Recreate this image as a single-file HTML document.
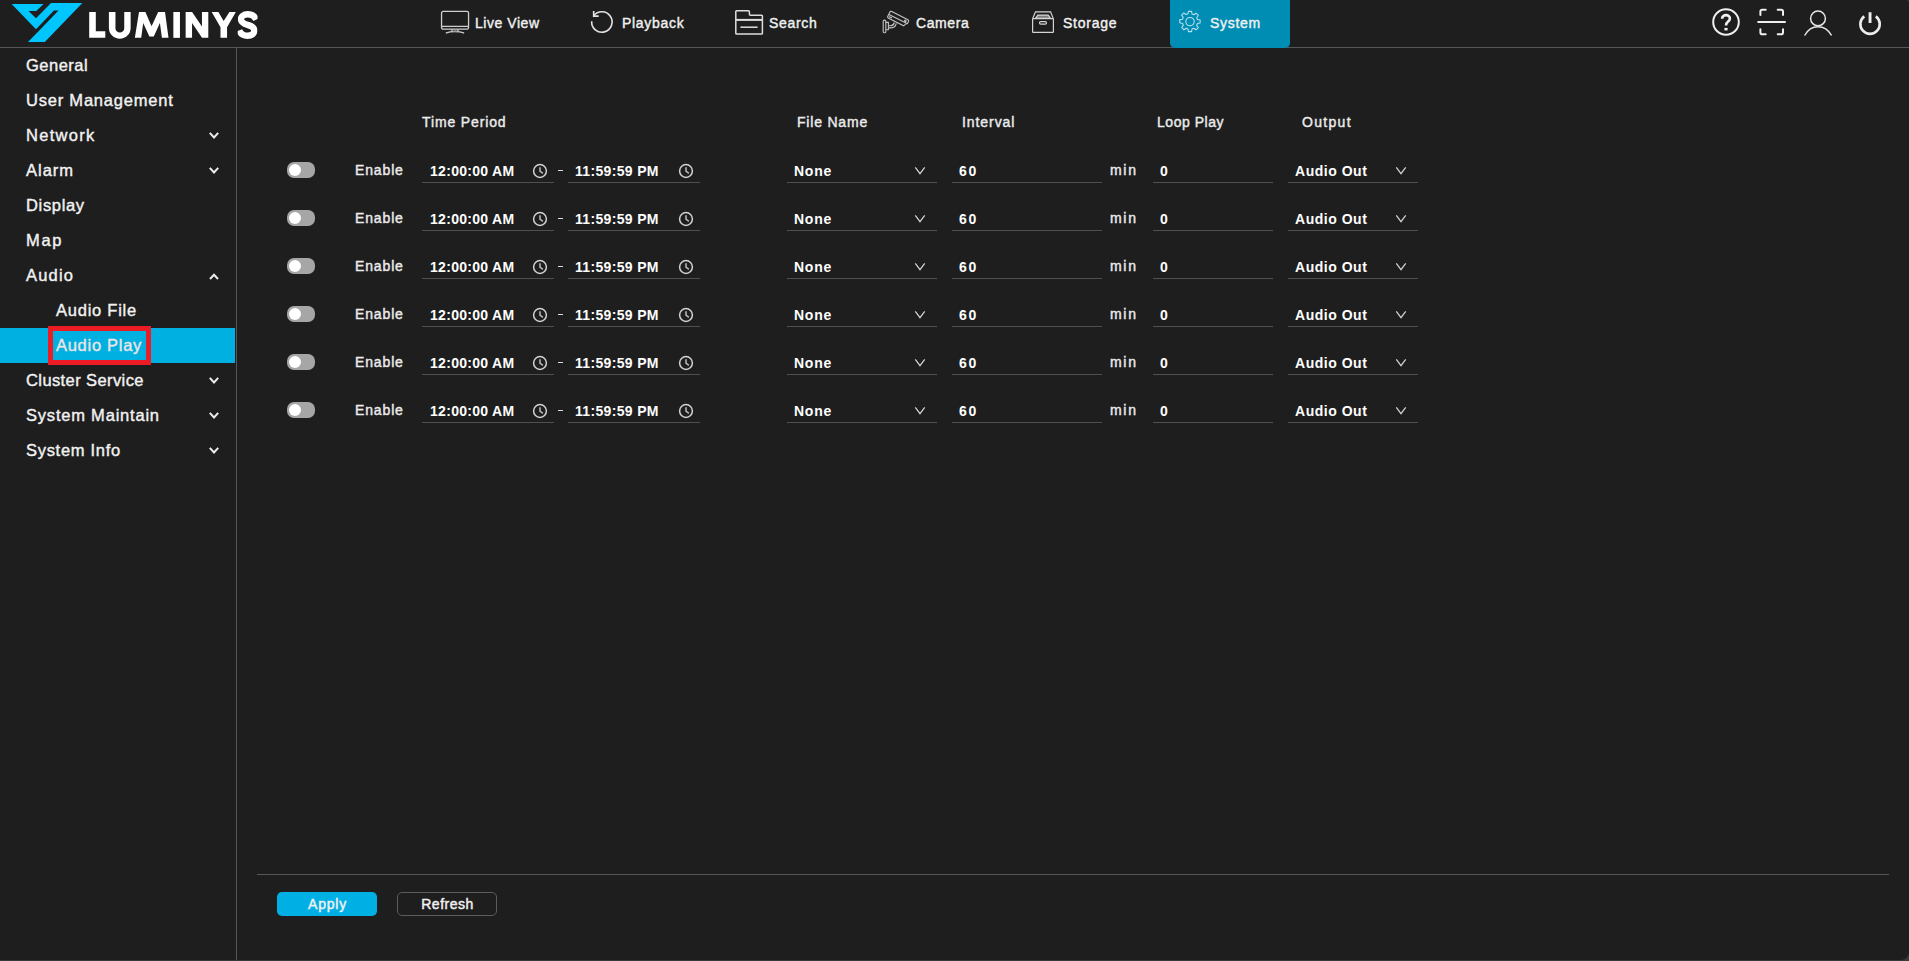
<!DOCTYPE html>
<html>
<head>
<meta charset="utf-8">
<title>Audio Play</title>
<style>
*{box-sizing:border-box;margin:0;padding:0}
html,body{width:1909px;height:961px;overflow:hidden;background:#3a3a3a}
body{font-family:"Liberation Sans",sans-serif;color:#ececec;font-weight:bold}
#app{position:absolute;left:0;top:0;width:1909px;height:960px;background:#1e1e1e;border-radius:0 3px 8px 0;overflow:hidden}
.abs{position:absolute;white-space:nowrap;z-index:3}
/* top bar */
#topline{position:absolute;left:0;top:47px;width:1909px;height:1px;background:#555759}
#sideline{position:absolute;left:236px;top:48px;width:1px;height:913px;background:#555759}
.nav{position:absolute;z-index:3;top:0;height:47px;line-height:46px;font-size:14px;color:#f0f0f0;white-space:nowrap;font-weight:normal;-webkit-text-stroke:.4px #f0f0f0}
#navsys{position:absolute;left:1170px;top:0;width:120px;height:48px;background:#008db4;border-radius:0 0 5px 5px;z-index:2}
/* sidebar */
.si{position:absolute;left:26px;height:35px;line-height:35px;font-size:16.5px;letter-spacing:.6px;color:#f2f2f2;white-space:nowrap;font-weight:normal;-webkit-text-stroke:.4px #f2f2f2}
.si.sub{left:56px}
.chev{position:absolute;left:208px;width:12px;height:8px}
#sel{position:absolute;left:0;top:328px;width:235px;height:35px;background:#00b0e0}
#redbox{position:absolute;left:48px;top:326px;width:103px;height:39px;border:5px solid #ed1c24}
/* table */
.th{position:absolute;top:112px;height:20px;line-height:20px;font-size:14px;color:#ececec;white-space:nowrap;font-weight:normal;-webkit-text-stroke:.4px #ececec}
.row{position:absolute;left:0;width:1909px;height:48px}
.tg{position:absolute;left:287px;top:-8px;width:28px;height:16px;border-radius:7px;background:#a6a6a6}
.tg i{position:absolute;left:2px;top:2px;width:12px;height:12px;border-radius:6px;background:#fff}
.lbl{position:absolute;font-size:14px;height:20px;line-height:20px;top:-10px;color:#ececec;white-space:nowrap;font-weight:normal;-webkit-text-stroke:.4px #ececec}
.inp{position:absolute;top:-13px;height:26px;border-bottom:1px solid #4e5051;font-size:14px;line-height:28px;padding-left:7px;color:#fff;white-space:nowrap}
.ico{position:absolute}
.dash{position:absolute;left:558px;top:0;width:5px;height:1.400px;background:#dcdcdc}
/* bottom */
#botline{position:absolute;left:257px;top:874px;width:1632px;height:1px;background:#555759}
.btn{position:absolute;top:892px;width:100px;height:24px;line-height:25px;border-radius:5px;text-align:center;font-size:14px;color:#f0f0f0;font-weight:normal;-webkit-text-stroke:.45px #f0f0f0}
#apply{left:277px;background:#00b0e4;letter-spacing:.75px;padding-left:1px}
#refresh{left:397px;border:1px solid #5a5c5e;line-height:23px;letter-spacing:.5px;padding-left:1px}
</style>
</head>
<body>
<div id="app">
<!--TOPBAR-->
<svg class="abs" style="left:0;top:0" width="100" height="47" viewBox="0 0 100 47"><path fill="#00c6ff" d="M11.6 4 L43.6 4 L36.3 11 L28.6 11 L36 18.3 L51 3.1 L82.4 3.1 L44.8 42 L28 42 L38.3 31.4 L58.5 10.4 L54 10.4 L36 29.2 Z"/></svg>
<svg class="abs" style="left:0;top:0" width="270" height="47" viewBox="0 0 270 47" fill="#fff">
<path d="M89.2 12H95.800V31.300H105.300V37.850H89.200Z"/>
<path d="M108.900 12H115.450V28.200A4.400 4.400 0 0 0 124.250 28.200V12H130.650V28A10.870 10.750 0 0 1 108.900 28Z"/>
<path d="M134.850 37.850L139 12H145.400L151.560 26.200L158.150 12H165L168.500 37.850H161.900L159.900 23L153.760 36.600H149.360L143.200 23L141.200 37.850Z"/>
<path d="M173.350 12H179.950V37.850H173.350Z"/>
<path d="M185.650 37.850V12H192.100L201.950 26.600V12H208.300V37.850H202L192.050 23.100V37.850Z"/>
<path d="M211.700 12H218.400L223.650 21L229.450 12H235.850L227.050 27.350V37.850H220.500V27.350Z"/>
<clipPath id="sc"><rect x="237.700" y="0" width="19.850" height="47"/></clipPath><path clip-path="url(#sc)" fill="none" stroke="#fff" stroke-width="6.400" d="M256.200 19.600C254.300 15.600 251.400 14.300 247.600 14.300C243.600 14.300 241 16.300 241 19.300C241 22.400 243.500 23.700 247.600 24.900C251.700 26.100 254.300 27.400 254.300 30.600C254.300 33.700 251.600 35.700 247.500 35.700C243.700 35.700 240.800 34.200 239.200 30.400"/>
</svg>
<div id="navsys"></div>
<!-- live view -->
<svg class="abs" style="left:440px;top:10px" width="30" height="24" viewBox="0 0 30 24" fill="none" stroke="#cecece" stroke-width="1.300"><rect x="1.550" y="1.400" width="27" height="17.800" rx="1.600"/><path d="M1.600 16.300H28.500M11.900 19.600V21.600M18 19.600V21.600"/><path d="M6.400 22.900C10.500 21.200 19.500 21.200 23.600 22.900" stroke-width="1.400" stroke-linecap="round"/><rect x="13.300" y="20.200" width="3.400" height="1.500" fill="#8a8a8a" stroke="none"/></svg>
<div class="nav" style="left:475px;letter-spacing:0.55px">Live View</div>
<!-- playback -->
<svg class="abs" style="left:589px;top:9px" width="26" height="26" viewBox="0 0 26 26" fill="none" stroke="#e2e2e2" stroke-width="1.600"><path d="M2.700 12.200A10.200 10.200 0 1 0 4.700 6.900"/><path d="M4.700 1.900V7.100H9.700" stroke-width="1.700"/></svg>
<div class="nav" style="left:622px;letter-spacing:0.71px">Playback</div>
<!-- search -->
<svg class="abs" style="left:734px;top:9px" width="30" height="27" viewBox="0 0 30 27" fill="none" stroke="#dedede" stroke-width="1.500"><path d="M2.600 25.100Q1.800 25.100 1.800 24.300V2.600Q1.800 1.800 2.600 1.800H14.400Q15.400 1.800 15.400 2.800V5.200Q15.400 6.200 16.400 6.200H27.600Q28.400 6.200 28.400 7V24.300Q28.400 25.100 27.600 25.100Z"/><path d="M1.800 10.900H28.400" stroke-width="2"/><path d="M6.400 18.200H23.600" stroke-width="1.500"/></svg>
<div class="nav" style="left:769px;letter-spacing:0.7px">Search</div>
<!-- camera -->
<svg class="abs" style="left:881px;top:9px" width="30" height="26" viewBox="0 0 30 26" fill="none" stroke="#c4c4c4" stroke-width="1.100"><g transform="translate(9.500 1.900) rotate(26.800)"><path d="M1.400 0H19.600Q20.800 0 20.800 1.200V3.300Q20.800 4.300 19.700 4.300L18.500 7.400H1.600Q0 7.400 0 5.800V1.400Q0 0 1.400 0Z"/><path d="M.200 3.900H19.900M1.200 5.700H4.500"/><circle cx="17.700" cy="2.200" r=".800"/></g><rect x="2.200" y="11.100" width="2.600" height="12.700" rx="1.100"/><path d="M4.800 13.400H7.400V20.800H4.800"/><path d="M7.400 16.700H9.600Q12.600 16.700 13.400 13.500M7.400 18.900H10.400Q14.200 18.900 15.300 14.400"/></svg>
<div class="nav" style="left:916px;letter-spacing:0.6px">Camera</div>
<!-- storage -->
<svg class="abs" style="left:1031px;top:10px" width="24" height="24" viewBox="0 0 24 24" fill="none" stroke="#d4d4d4" stroke-width="1.200"><rect x="1.600" y="8.600" width="20.800" height="13.700" rx=".600"/><path d="M1.700 8.600L4.500 1.800H19.600L22.300 8.600"/><path d="M4.400 8.400L6.800 5.100H17.200L19.700 8.400Z" fill="#7c7c7c"/><rect x="8.500" y="11.600" width="7" height="2.500" rx="1.250"/></svg>
<div class="nav" style="left:1063px;letter-spacing:0.77px">Storage</div>
<!-- system -->
<svg class="abs" style="left:1178px;top:10px" width="24" height="24" viewBox="0 0 24 24" fill="none" stroke="#b9e0ee" stroke-width="1.150" stroke-linejoin="round"><g transform="translate(12 11.600) scale(.930) translate(-12 -11.600)"><circle cx="12" cy="11.600" r="4.500"/><path d="M10.300 1h3.400l.5 2.9 1.9.8 2.4-1.7 2.4 2.4-1.7 2.4.8 1.9 2.9.5v3.4l-2.9.5-.8 1.9 1.7 2.4-2.4 2.4-2.4-1.7-1.9.8-.5 2.9h-3.4l-.5-2.9-1.9-.8-2.4 1.7-2.4-2.4 1.7-2.4-.8-1.9L1 13.300v-3.4l2.900-.5.8-1.9-1.700-2.400 2.400-2.400 2.400 1.700 1.900-.8z" transform="translate(0 -0.400)"/></g></svg>
<div class="nav" style="left:1210px;letter-spacing:0.7px">System</div>
<!-- right icons -->
<svg class="abs" style="left:1710px;top:6px" width="32" height="32" viewBox="0 0 32 32" fill="none" stroke="#efefef" stroke-width="2"><circle cx="16" cy="16" r="12.8"/><path d="M12.100 12.700C12.100 8 19.900 8 19.900 12.600C19.900 15.700 16 15.500 16 19.400" stroke-width="2.600"/><rect x="14.400" y="21.900" width="3.200" height="2.500" fill="#efefef" stroke="none"/></svg>
<svg class="abs" style="left:1756px;top:7px" width="32" height="30" viewBox="0 0 32 30" fill="none" stroke="#efefef" stroke-width="2" stroke-linecap="round"><path d="M2.200 15H29"/><path d="M4.400 7.900V4.600Q4.400 2.800 6.200 2.800H9.700M21.700 2.800H25.200Q27 2.800 27 4.600V7.900M4.400 22.300V25.400Q4.400 27.200 6.200 27.200H9.700M21.700 27.200H25.200Q27 27.200 27 25.400V22.300"/></svg>
<svg class="abs" style="left:1802px;top:8px" width="32" height="30" viewBox="0 0 32 30" fill="none" stroke="#e6e6e6" stroke-width="1.500"><circle cx="16" cy="10.400" r="7.400"/><path d="M2.600 27.500C9 15.800 23 15.800 29.600 27.500"/></svg>
<svg class="abs" style="left:1856px;top:9px" width="28" height="28" viewBox="0 0 28 28" fill="none" stroke="#ececec" stroke-width="2.600"><path d="M14.050 3.200V14" stroke-width="2.900"/><path d="M8.300 7.400A9.700 9.700 0 1 0 19.800 7.400"/></svg>
<div id="topline"></div>
<!--/TOPBAR-->
<!--SIDEBAR-->
<div id="sel"></div>
<div class="si" style="top:48px;letter-spacing:0.5px">General</div>
<div class="si" style="top:83px;letter-spacing:0.79px">User Management</div>
<div class="si" style="top:118px;letter-spacing:1.3px">Network</div>
<svg class="chev" style="top:132px" viewBox="0 0 12 8" fill="none" stroke="#ececec" stroke-width="2"><path d="M1.800 .800L6 5.400L10.200 .800"/></svg>
<div class="si" style="top:153px;letter-spacing:1.0px">Alarm</div>
<svg class="chev" style="top:167px" viewBox="0 0 12 8" fill="none" stroke="#ececec" stroke-width="2"><path d="M1.800 .800L6 5.400L10.200 .800"/></svg>
<div class="si" style="top:188px;letter-spacing:0.67px">Display</div>
<div class="si" style="top:223px;letter-spacing:1.7px">Map</div>
<div class="si" style="top:258px;letter-spacing:1.2px">Audio</div>
<svg class="chev" style="top:272px" viewBox="0 0 12 8" fill="none" stroke="#ececec" stroke-width="2"><path d="M2 7L6 2.800L10 7"/></svg>
<div class="si sub" style="top:293px;letter-spacing:0.76px">Audio File</div>
<div class="si sub" style="top:328px;letter-spacing:0.72px;color:#ebe6e6;-webkit-text-stroke-color:#ebe6e6">Audio Play</div>
<div class="si" style="top:363px;letter-spacing:0.4px">Cluster Service</div>
<svg class="chev" style="top:377px" viewBox="0 0 12 8" fill="none" stroke="#ececec" stroke-width="2"><path d="M1.800 .800L6 5.400L10.200 .800"/></svg>
<div class="si" style="top:398px;letter-spacing:0.79px">System Maintain</div>
<svg class="chev" style="top:412px" viewBox="0 0 12 8" fill="none" stroke="#ececec" stroke-width="2"><path d="M1.800 .800L6 5.400L10.200 .800"/></svg>
<div class="si" style="top:433px;letter-spacing:0.7px">System Info</div>
<svg class="chev" style="top:447px" viewBox="0 0 12 8" fill="none" stroke="#ececec" stroke-width="2"><path d="M1.800 .800L6 5.400L10.200 .800"/></svg>
<div id="redbox"></div>
<div id="sideline"></div>
<!--/SIDEBAR-->
<!--MAIN-->
<div class="th" style="left:422px;letter-spacing:0.87px">Time Period</div>
<div class="th" style="left:797px;letter-spacing:0.8px">File Name</div>
<div class="th" style="left:962px;letter-spacing:0.93px">Interval</div>
<div class="th" style="left:1157px;letter-spacing:0.54px">Loop Play</div>
<div class="th" style="left:1302px;letter-spacing:1.3px">Output</div>
<div class="row" style="top:170px"><div class="tg"><i></i></div><div class="lbl" style="left:355px;letter-spacing:.86px">Enable</div><div class="inp" style="left:422px;width:132px;letter-spacing:.3px;padding-left:8px">12:00:00 AM</div><svg class="ico" style="left:532px;top:-7px" width="16" height="16" viewBox="0 0 16 16" fill="none" stroke="#d2d2d2" stroke-width="1.500"><circle cx="8" cy="8" r="6.400"/><path d="M8 4.300V8L10.900 10.400" stroke="#b4b4b4" stroke-width="1.600"/></svg><div class="dash"></div><div class="inp" style="left:568px;width:132px;letter-spacing:.33px">11:59:59 PM</div><svg class="ico" style="left:678px;top:-7px" width="16" height="16" viewBox="0 0 16 16" fill="none" stroke="#d2d2d2" stroke-width="1.500"><circle cx="8" cy="8" r="6.400"/><path d="M8 4.300V8L10.900 10.400" stroke="#b4b4b4" stroke-width="1.600"/></svg><div class="inp" style="left:787px;width:150px;letter-spacing:.75px">None</div><svg class="ico" style="left:914px;top:-4px" width="12" height="9" viewBox="0 0 12 9" fill="none" stroke="#d4d4d4" stroke-width="1.250"><path d="M1.300 1.400L6 7.600L10.700 1.400"/></svg><div class="inp" style="left:952px;width:150px;letter-spacing:1.600px">60</div><div class="lbl" style="left:1110px;letter-spacing:1.700px">min</div><div class="inp" style="left:1153px;width:120px">0</div><div class="inp" style="left:1288px;width:130px;letter-spacing:.52px">Audio Out</div><svg class="ico" style="left:1395px;top:-4px" width="12" height="9" viewBox="0 0 12 9" fill="none" stroke="#d4d4d4" stroke-width="1.250"><path d="M1.300 1.400L6 7.600L10.700 1.400"/></svg></div>
<div class="row" style="top:218px"><div class="tg"><i></i></div><div class="lbl" style="left:355px;letter-spacing:.86px">Enable</div><div class="inp" style="left:422px;width:132px;letter-spacing:.3px;padding-left:8px">12:00:00 AM</div><svg class="ico" style="left:532px;top:-7px" width="16" height="16" viewBox="0 0 16 16" fill="none" stroke="#d2d2d2" stroke-width="1.500"><circle cx="8" cy="8" r="6.400"/><path d="M8 4.300V8L10.900 10.400" stroke="#b4b4b4" stroke-width="1.600"/></svg><div class="dash"></div><div class="inp" style="left:568px;width:132px;letter-spacing:.33px">11:59:59 PM</div><svg class="ico" style="left:678px;top:-7px" width="16" height="16" viewBox="0 0 16 16" fill="none" stroke="#d2d2d2" stroke-width="1.500"><circle cx="8" cy="8" r="6.400"/><path d="M8 4.300V8L10.900 10.400" stroke="#b4b4b4" stroke-width="1.600"/></svg><div class="inp" style="left:787px;width:150px;letter-spacing:.75px">None</div><svg class="ico" style="left:914px;top:-4px" width="12" height="9" viewBox="0 0 12 9" fill="none" stroke="#d4d4d4" stroke-width="1.250"><path d="M1.300 1.400L6 7.600L10.700 1.400"/></svg><div class="inp" style="left:952px;width:150px;letter-spacing:1.600px">60</div><div class="lbl" style="left:1110px;letter-spacing:1.700px">min</div><div class="inp" style="left:1153px;width:120px">0</div><div class="inp" style="left:1288px;width:130px;letter-spacing:.52px">Audio Out</div><svg class="ico" style="left:1395px;top:-4px" width="12" height="9" viewBox="0 0 12 9" fill="none" stroke="#d4d4d4" stroke-width="1.250"><path d="M1.300 1.400L6 7.600L10.700 1.400"/></svg></div>
<div class="row" style="top:266px"><div class="tg"><i></i></div><div class="lbl" style="left:355px;letter-spacing:.86px">Enable</div><div class="inp" style="left:422px;width:132px;letter-spacing:.3px;padding-left:8px">12:00:00 AM</div><svg class="ico" style="left:532px;top:-7px" width="16" height="16" viewBox="0 0 16 16" fill="none" stroke="#d2d2d2" stroke-width="1.500"><circle cx="8" cy="8" r="6.400"/><path d="M8 4.300V8L10.900 10.400" stroke="#b4b4b4" stroke-width="1.600"/></svg><div class="dash"></div><div class="inp" style="left:568px;width:132px;letter-spacing:.33px">11:59:59 PM</div><svg class="ico" style="left:678px;top:-7px" width="16" height="16" viewBox="0 0 16 16" fill="none" stroke="#d2d2d2" stroke-width="1.500"><circle cx="8" cy="8" r="6.400"/><path d="M8 4.300V8L10.900 10.400" stroke="#b4b4b4" stroke-width="1.600"/></svg><div class="inp" style="left:787px;width:150px;letter-spacing:.75px">None</div><svg class="ico" style="left:914px;top:-4px" width="12" height="9" viewBox="0 0 12 9" fill="none" stroke="#d4d4d4" stroke-width="1.250"><path d="M1.300 1.400L6 7.600L10.700 1.400"/></svg><div class="inp" style="left:952px;width:150px;letter-spacing:1.600px">60</div><div class="lbl" style="left:1110px;letter-spacing:1.700px">min</div><div class="inp" style="left:1153px;width:120px">0</div><div class="inp" style="left:1288px;width:130px;letter-spacing:.52px">Audio Out</div><svg class="ico" style="left:1395px;top:-4px" width="12" height="9" viewBox="0 0 12 9" fill="none" stroke="#d4d4d4" stroke-width="1.250"><path d="M1.300 1.400L6 7.600L10.700 1.400"/></svg></div>
<div class="row" style="top:314px"><div class="tg"><i></i></div><div class="lbl" style="left:355px;letter-spacing:.86px">Enable</div><div class="inp" style="left:422px;width:132px;letter-spacing:.3px;padding-left:8px">12:00:00 AM</div><svg class="ico" style="left:532px;top:-7px" width="16" height="16" viewBox="0 0 16 16" fill="none" stroke="#d2d2d2" stroke-width="1.500"><circle cx="8" cy="8" r="6.400"/><path d="M8 4.300V8L10.900 10.400" stroke="#b4b4b4" stroke-width="1.600"/></svg><div class="dash"></div><div class="inp" style="left:568px;width:132px;letter-spacing:.33px">11:59:59 PM</div><svg class="ico" style="left:678px;top:-7px" width="16" height="16" viewBox="0 0 16 16" fill="none" stroke="#d2d2d2" stroke-width="1.500"><circle cx="8" cy="8" r="6.400"/><path d="M8 4.300V8L10.900 10.400" stroke="#b4b4b4" stroke-width="1.600"/></svg><div class="inp" style="left:787px;width:150px;letter-spacing:.75px">None</div><svg class="ico" style="left:914px;top:-4px" width="12" height="9" viewBox="0 0 12 9" fill="none" stroke="#d4d4d4" stroke-width="1.250"><path d="M1.300 1.400L6 7.600L10.700 1.400"/></svg><div class="inp" style="left:952px;width:150px;letter-spacing:1.600px">60</div><div class="lbl" style="left:1110px;letter-spacing:1.700px">min</div><div class="inp" style="left:1153px;width:120px">0</div><div class="inp" style="left:1288px;width:130px;letter-spacing:.52px">Audio Out</div><svg class="ico" style="left:1395px;top:-4px" width="12" height="9" viewBox="0 0 12 9" fill="none" stroke="#d4d4d4" stroke-width="1.250"><path d="M1.300 1.400L6 7.600L10.700 1.400"/></svg></div>
<div class="row" style="top:362px"><div class="tg"><i></i></div><div class="lbl" style="left:355px;letter-spacing:.86px">Enable</div><div class="inp" style="left:422px;width:132px;letter-spacing:.3px;padding-left:8px">12:00:00 AM</div><svg class="ico" style="left:532px;top:-7px" width="16" height="16" viewBox="0 0 16 16" fill="none" stroke="#d2d2d2" stroke-width="1.500"><circle cx="8" cy="8" r="6.400"/><path d="M8 4.300V8L10.900 10.400" stroke="#b4b4b4" stroke-width="1.600"/></svg><div class="dash"></div><div class="inp" style="left:568px;width:132px;letter-spacing:.33px">11:59:59 PM</div><svg class="ico" style="left:678px;top:-7px" width="16" height="16" viewBox="0 0 16 16" fill="none" stroke="#d2d2d2" stroke-width="1.500"><circle cx="8" cy="8" r="6.400"/><path d="M8 4.300V8L10.900 10.400" stroke="#b4b4b4" stroke-width="1.600"/></svg><div class="inp" style="left:787px;width:150px;letter-spacing:.75px">None</div><svg class="ico" style="left:914px;top:-4px" width="12" height="9" viewBox="0 0 12 9" fill="none" stroke="#d4d4d4" stroke-width="1.250"><path d="M1.300 1.400L6 7.600L10.700 1.400"/></svg><div class="inp" style="left:952px;width:150px;letter-spacing:1.600px">60</div><div class="lbl" style="left:1110px;letter-spacing:1.700px">min</div><div class="inp" style="left:1153px;width:120px">0</div><div class="inp" style="left:1288px;width:130px;letter-spacing:.52px">Audio Out</div><svg class="ico" style="left:1395px;top:-4px" width="12" height="9" viewBox="0 0 12 9" fill="none" stroke="#d4d4d4" stroke-width="1.250"><path d="M1.300 1.400L6 7.600L10.700 1.400"/></svg></div>
<div class="row" style="top:410px"><div class="tg"><i></i></div><div class="lbl" style="left:355px;letter-spacing:.86px">Enable</div><div class="inp" style="left:422px;width:132px;letter-spacing:.3px;padding-left:8px">12:00:00 AM</div><svg class="ico" style="left:532px;top:-7px" width="16" height="16" viewBox="0 0 16 16" fill="none" stroke="#d2d2d2" stroke-width="1.500"><circle cx="8" cy="8" r="6.400"/><path d="M8 4.300V8L10.900 10.400" stroke="#b4b4b4" stroke-width="1.600"/></svg><div class="dash"></div><div class="inp" style="left:568px;width:132px;letter-spacing:.33px">11:59:59 PM</div><svg class="ico" style="left:678px;top:-7px" width="16" height="16" viewBox="0 0 16 16" fill="none" stroke="#d2d2d2" stroke-width="1.500"><circle cx="8" cy="8" r="6.400"/><path d="M8 4.300V8L10.900 10.400" stroke="#b4b4b4" stroke-width="1.600"/></svg><div class="inp" style="left:787px;width:150px;letter-spacing:.75px">None</div><svg class="ico" style="left:914px;top:-4px" width="12" height="9" viewBox="0 0 12 9" fill="none" stroke="#d4d4d4" stroke-width="1.250"><path d="M1.300 1.400L6 7.600L10.700 1.400"/></svg><div class="inp" style="left:952px;width:150px;letter-spacing:1.600px">60</div><div class="lbl" style="left:1110px;letter-spacing:1.700px">min</div><div class="inp" style="left:1153px;width:120px">0</div><div class="inp" style="left:1288px;width:130px;letter-spacing:.52px">Audio Out</div><svg class="ico" style="left:1395px;top:-4px" width="12" height="9" viewBox="0 0 12 9" fill="none" stroke="#d4d4d4" stroke-width="1.250"><path d="M1.300 1.400L6 7.600L10.700 1.400"/></svg></div>
<!--/MAIN-->
<!--BOTTOM-->
<div id="botline"></div>
<div id="apply" class="btn">Apply</div>
<div id="refresh" class="btn">Refresh</div>
<!--/BOTTOM-->
</div>
</body>
</html>
